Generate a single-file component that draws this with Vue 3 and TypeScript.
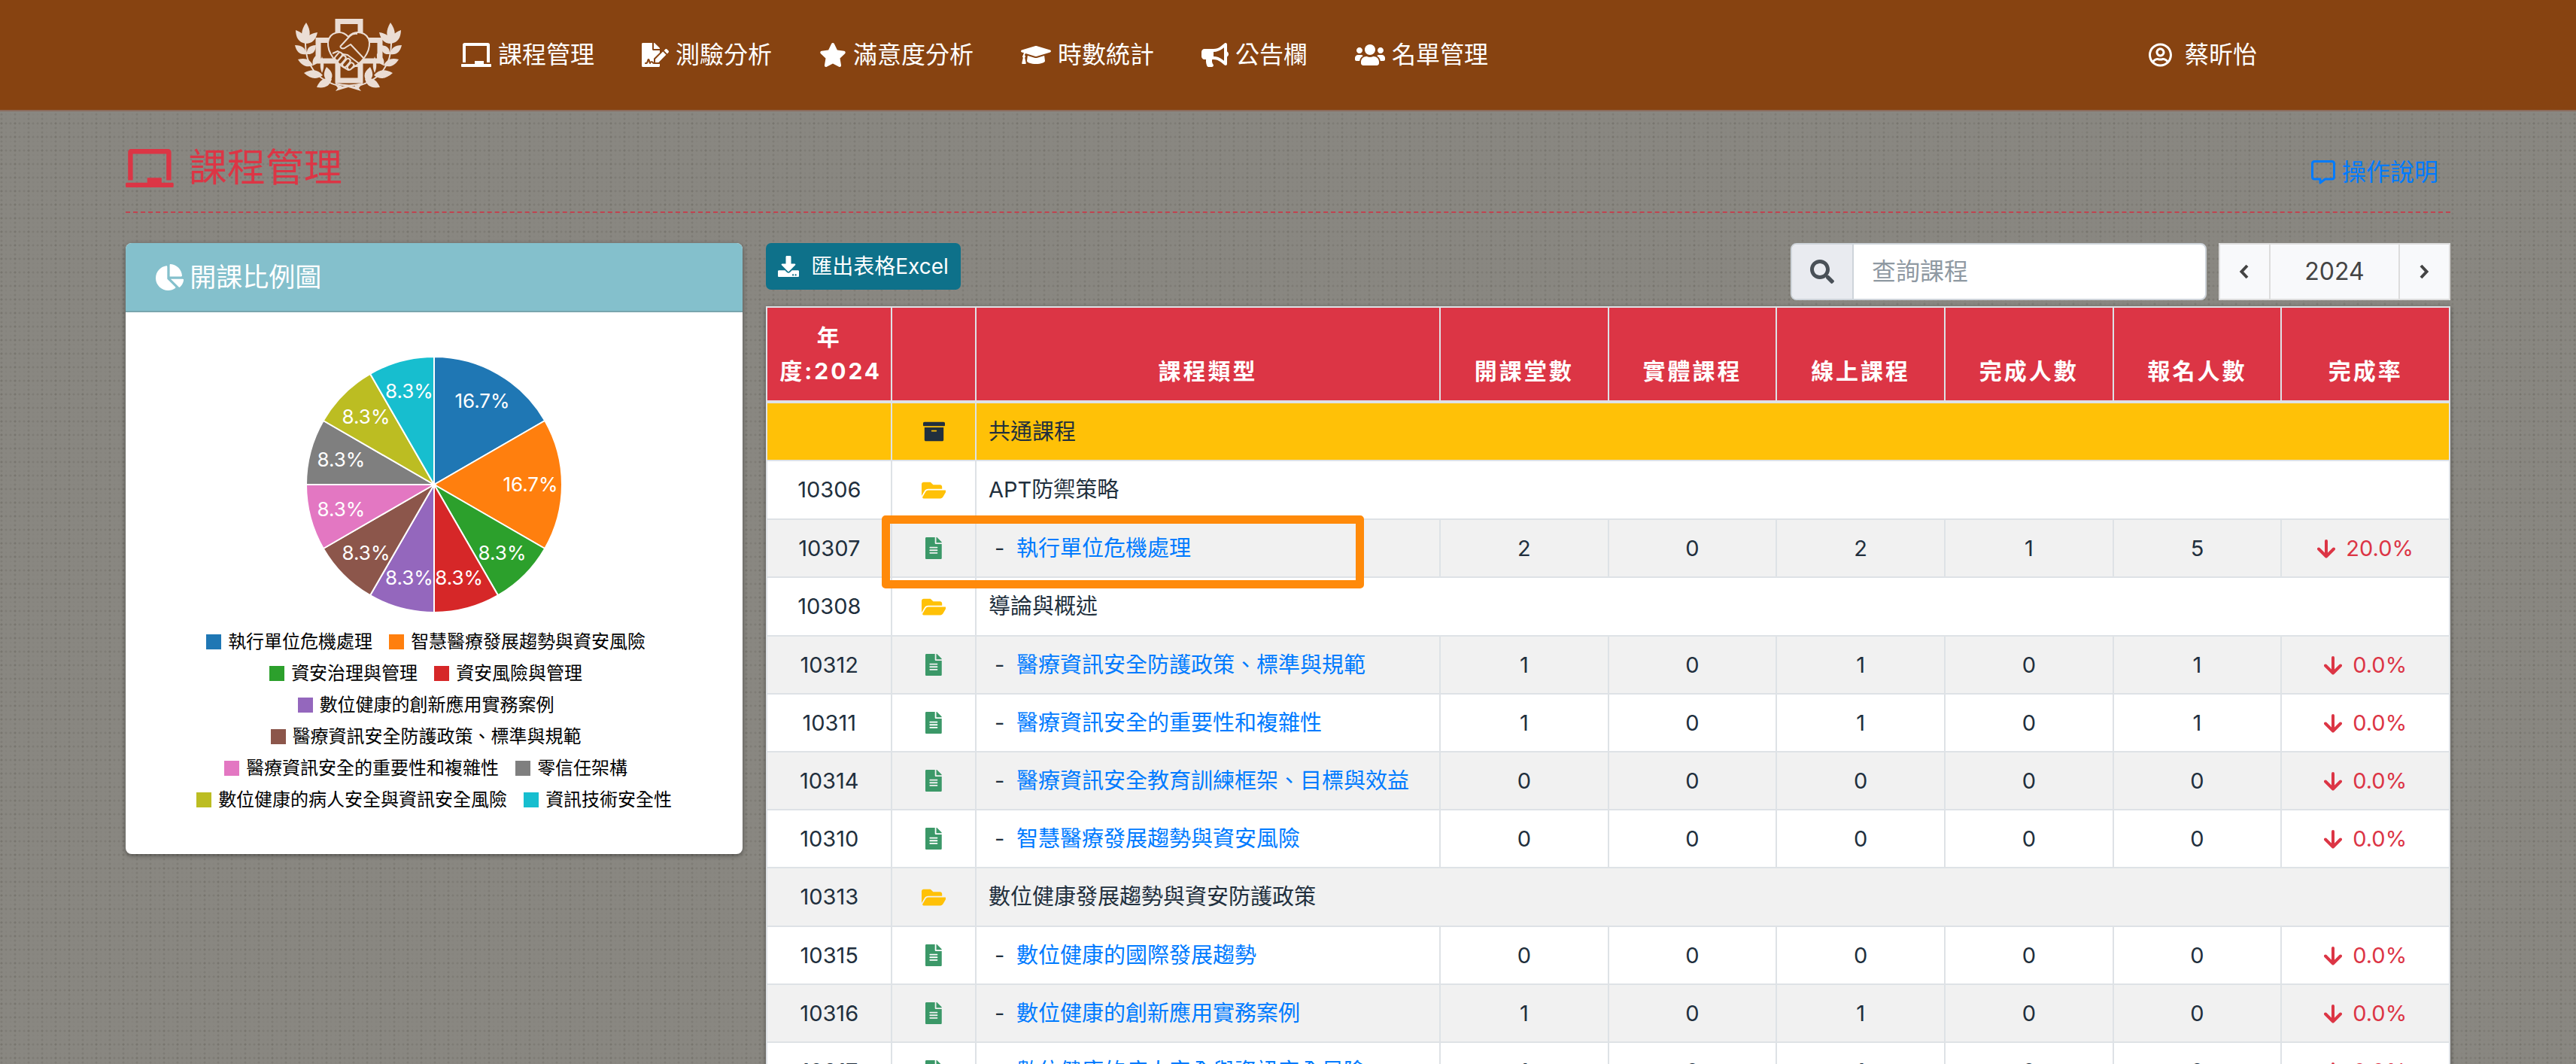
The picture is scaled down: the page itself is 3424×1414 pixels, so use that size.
<script setup lang="ts">
import { ref } from 'vue'

interface IconDef { width: number; path: string }
interface Course {
  id: string
  kind: 'group' | 'folder' | 'course'
  title: string
  values?: number[]
  rate?: string
}

const icons: Record<string, IconDef> = {
  board: { width: 640, path: 'M96 64h448v352h64V40c0-22.06-17.94-40-40-40H72C49.94 0 32 17.94 32 40v376h64V64zm528 384H480v-64H288v64H16c-8.84 0-16 7.16-16 16v32c0 8.84 7.16 16 16 16h608c8.84 0 16-7.16 16-16v-32c0-8.84-7.16-16-16-16z' },
  sign: { width: 576, path: 'M218.17 424.14c-2.95-5.92-8.09-6.52-10.17-6.52s-7.22.59-10.02 6.19l-7.67 15.34c-6.37 12.78-25.03 11.37-29.48-2.09L144 386.59l-10.61 31.88c-5.89 17.66-22.38 29.53-41 29.53H80c-8.84 0-16-7.16-16-16s7.16-16 16-16h12.39c4.83 0 9.11-3.08 10.64-7.66l18.19-54.64c3.3-9.81 12.44-16.41 22.78-16.41s19.48 6.59 22.77 16.41l13.88 41.64c19.75-16.19 54.06-9.7 66 14.16 1.89 3.78 5.49 5.95 9.36 6.26v-82.12l128-127.09V160H248c-13.2 0-24-10.8-24-24V0H24C10.7 0 0 10.7 0 24v464c0 13.3 10.7 24 24 24h336c13.3 0 24-10.7 24-24v-40l-128-.11c-16.12-.31-30.58-9.28-37.83-23.75zM384 121.9c0-6.3-2.5-12.4-7-16.9L279.1 7c-4.5-4.5-10.6-7-17-7H256v128h128v-6.1zm-96 225.06V416h68.99l161.68-162.78-67.88-67.88L288 346.96zm280.54-179.63l-31.87-31.87c-9.94-9.94-26.07-9.94-36.01 0l-27.25 27.25 67.88 67.88 27.25-27.25c9.95-9.94 9.95-26.07 0-36.01z' },
  star: { width: 576, path: 'M259.3 17.8L194 150.2 47.9 171.5c-26.2 3.8-36.7 36.1-17.7 54.6l105.7 103-25 145.5c-4.5 26.3 23.2 46 46.4 33.7L288 439.6l130.7 68.7c23.2 12.2 50.9-7.4 46.4-33.7l-25-145.5 105.7-103c19-18.5 8.5-50.8-17.7-54.6L382 150.2 316.7 17.8c-11.7-23.6-45.6-23.9-57.4 0z' },
  cap: { width: 640, path: 'M622.34 153.2L343.4 67.5c-15.2-4.67-31.6-4.67-46.79 0L17.66 153.2c-23.54 7.23-23.54 38.36 0 45.59l48.63 14.94c-10.67 13.19-17.23 29.28-17.88 46.9C38.78 266.15 32 276.11 32 288c0 10.78 5.68 19.85 13.86 25.65L20.33 428.53C18.11 438.52 25.71 448 35.94 448h56.11c10.24 0 17.84-9.48 15.62-19.47L82.14 313.65C90.32 307.85 96 298.78 96 288c0-11.57-6.47-21.25-15.66-26.87.76-15.02 8.44-28.3 20.69-36.72L296.6 284.5c9.06 2.78 26.44 6.25 46.79 0l278.95-85.7c23.55-7.24 23.55-38.36 0-45.6zM352.79 315.09c-28.53 8.76-52.84 3.92-65.59 0l-145.02-44.55L128 384c0 35.35 85.96 64 192 64s192-28.65 192-64l-14.18-113.47-145.03 44.56z' },
  horn: { width: 576, path: 'M576 240c0-23.63-12.95-44.04-32-55.12V32.01C544 23.26 537.02 0 512 0c-7.12 0-14.19 2.38-19.98 7.02l-85.03 68.03C364.28 109.19 310.66 128 256 128H64c-35.35 0-64 28.65-64 64v96c0 35.35 28.65 64 64 64h33.7c-1.39 10.48-2.18 21.14-2.18 32 0 39.77 9.26 77.35 25.56 110.94 5.19 10.69 16.52 17.06 28.4 17.06h74.28c26.05 0 41.69-29.84 25.9-50.56-16.4-21.52-26.15-48.36-26.15-77.44 0-11.11 1.62-21.79 4.41-32H256c54.66 0 108.28 18.81 150.98 52.95l85.03 68.03a32.023 32.023 0 0 0 19.98 7.02c24.92 0 32-22.78 32-32V295.13C563.05 284.04 576 263.63 576 240zm-96 141.42l-33.05-26.44C392.95 311.78 325.12 288 256 288v-96c69.12 0 136.95-23.78 190.95-66.98L480 98.58v282.84z' },
  users: { width: 640, path: 'M96 224c35.3 0 64-28.7 64-64s-28.7-64-64-64-64 28.7-64 64 28.7 64 64 64zm448 0c35.3 0 64-28.7 64-64s-28.7-64-64-64-64 28.7-64 64 28.7 64 64 64zm32 32h-64c-17.6 0-33.5 7.1-45.1 18.6 40.3 22.1 68.9 62 75.1 109.4h66c17.7 0 32-14.3 32-32v-32c0-35.3-28.7-64-64-64zm-256 0c61.9 0 112-50.1 112-112S381.9 32 320 32 208 82.1 208 144s50.1 112 112 112zm76.8 32h-8.3c-20.8 10-43.9 16-68.5 16s-47.6-6-68.5-16h-8.3C179.6 288 128 339.6 128 403.2V432c0 26.5 21.5 48 48 48h288c26.5 0 48-21.5 48-48v-28.8c0-63.6-51.6-115.2-115.2-115.2zm-223.7-13.4C161.5 263.1 145.6 256 128 256H64c-35.3 0-64 28.7-64 64v32c0 17.7 14.3 32 32 32h65.9c6.3-47.4 34.9-87.3 75.2-109.4z' },
  user: { width: 496, path: 'M248 104c-53 0-96 43-96 96s43 96 96 96 96-43 96-96-43-96-96-96zm0 144c-26.5 0-48-21.5-48-48s21.5-48 48-48 48 21.5 48 48-21.5 48-48 48zm0-240C111 8 0 119 0 256s111 248 248 248 248-111 248-248S385 8 248 8zm0 448c-49.7 0-95.1-18.3-130.1-48.4 14.9-23 40.4-38.6 69.6-39.5 20.8 6.4 40.6 9.6 60.5 9.6s39.7-3.1 60.5-9.6c29.2 1 54.7 16.5 69.6 39.5-35 30.1-80.4 48.4-130.1 48.4zm162.7-84.1c-24.4-31.4-62.1-51.9-105.1-51.9-10.2 0-26 9.6-57.6 9.6-31.5 0-47.4-9.6-57.6-9.6-42.9 0-80.6 20.5-105.1 51.9C61.9 339.2 48 299.2 48 256c0-110.3 89.7-200 200-200s200 89.7 200 200c0 43.2-13.9 83.2-37.3 115.9z' },
  pie: { width: 544, path: 'M527.79 288H290.5l158.03 158.03c6.04 6.04 15.98 6.53 22.19.68 38.7-36.46 65.32-85.61 73.13-140.86 1.34-9.46-6.51-17.85-16.06-17.85zm-15.83-64.8C503.72 103.74 408.26 8.28 288.8.04 279.68-.59 272 7.1 272 16.24V240h223.77c9.14 0 16.82-7.68 16.19-16.8zM224 288V50.71c0-9.55-8.39-17.4-17.84-16.06C86.99 51.49-4.1 155.6.14 280.37 4.5 408.51 114.83 513.59 243.03 511.98c50.4-.63 96.97-16.87 135.26-44.03 7.9-5.6 8.42-17.23 1.57-24.08L224 288z' },
  download: { width: 512, path: 'M216 0h80c13.3 0 24 10.7 24 24v168h87.7c17.8 0 26.7 21.5 14.1 34.1L269.7 378.3c-7.5 7.5-19.8 7.5-27.3 0L90.1 226.1c-12.6-12.6-3.7-34.1 14.1-34.1H192V24c0-13.3 10.7-24 24-24zm296 376v112c0 13.3-10.7 24-24 24H24c-13.3 0-24-10.7-24-24V376c0-13.3 10.7-24 24-24h146.7l49 49c20.1 20.1 52.5 20.1 72.6 0l49-49H488c13.3 0 24 10.7 24 24zm-124 88c0-11-9-20-20-20s-20 9-20 20 9 20 20 20 20-9 20-20zm64 0c0-11-9-20-20-20s-20 9-20 20 9 20 20 20 20-9 20-20z' },
  search: { width: 512, path: 'M505 442.7L405.3 343c-4.5-4.5-10.6-7-17-7H372c27.6-35.3 44-79.7 44-128C416 93.1 322.9 0 208 0S0 93.1 0 208s93.1 208 208 208c48.3 0 92.7-16.4 128-44v16.3c0 6.4 2.5 12.5 7 17l99.7 99.7c9.4 9.4 24.6 9.4 33.9 0l28.3-28.3c9.4-9.4 9.4-24.6.1-34zM208 336c-70.7 0-128-57.2-128-128 0-70.7 57.2-128 128-128 70.7 0 128 57.2 128 128 0 70.7-57.2 128-128 128z' },
  group: { width: 512, path: 'M32 448c0 17.7 14.3 32 32 32h384c17.7 0 32-14.3 32-32V160H32v288zm160-212c0-6.6 5.4-12 12-12h104c6.6 0 12 5.4 12 12v8c0 6.6-5.4 12-12 12H204c-6.6 0-12-5.4-12-12v-8zM480 32H32C14.3 32 0 46.3 0 64v48c0 8.8 7.2 16 16 16h480c8.8 0 16-7.2 16-16V64c0-17.7-14.3-32-32-32z' },
  folder: { width: 576, path: 'M572.694 292.093L500.27 416.248A63.997 63.997 0 0 1 444.989 448H45.025c-18.523 0-30.064-20.093-20.731-36.093l72.424-124.155A64 64 0 0 1 152 256h399.964c18.523 0 30.064 20.093 20.73 36.093zM152 224h328v-48c0-26.51-21.49-48-48-48H272l-64-64H48C21.49 64 0 85.49 0 112v278.046l69.077-118.418C86.214 242.25 117.989 224 152 224z' },
  course: { width: 384, path: 'M224 136V0H24C10.7 0 0 10.7 0 24v464c0 13.3 10.7 24 24 24h336c13.3 0 24-10.7 24-24V160H248c-13.2 0-24-10.8-24-24zm64 236c0 6.6-5.4 12-12 12H108c-6.6 0-12-5.4-12-12v-8c0-6.6 5.4-12 12-12h168c6.6 0 12 5.4 12 12v8zm0-64c0 6.6-5.4 12-12 12H108c-6.6 0-12-5.4-12-12v-8c0-6.6 5.4-12 12-12h168c6.6 0 12 5.4 12 12v8zm0-72v8c0 6.6-5.4 12-12 12H108c-6.6 0-12-5.4-12-12v-8c0-6.6 5.4-12 12-12h168c6.6 0 12 5.4 12 12zm96-114.1v6.1H256V0h6.1c6.4 0 12.5 2.5 17 7l97.9 98c4.5 4.5 7 10.6 7 16.9z' },
}
const box = (name: string) => `0 0 ${icons[name].width} 512`

const nav = [
  { icon: 'board', label: '課程管理' },
  { icon: 'sign', label: '測驗分析' },
  { icon: 'star', label: '滿意度分析' },
  { icon: 'cap', label: '時數統計' },
  { icon: 'horn', label: '公告欄' },
  { icon: 'users', label: '名單管理' },
]

const shares = [
  { name: '執行單位危機處理', count: 2, color: '#1f77b4' },
  { name: '智慧醫療發展趨勢與資安風險', count: 2, color: '#ff7f0e' },
  { name: '資安治理與管理', count: 1, color: '#2ca02c' },
  { name: '資安風險與管理', count: 1, color: '#d62728' },
  { name: '數位健康的創新應用實務案例', count: 1, color: '#9467bd' },
  { name: '醫療資訊安全防護政策、標準與規範', count: 1, color: '#8c564b' },
  { name: '醫療資訊安全的重要性和複雜性', count: 1, color: '#e377c2' },
  { name: '零信任架構', count: 1, color: '#7f7f7f' },
  { name: '數位健康的病人安全與資訊安全風險', count: 1, color: '#bcbd22' },
  { name: '資訊技術安全性', count: 1, color: '#17becf' },
]

const total = shares.reduce((sum, s) => sum + s.count, 0)
const radius = 170
let turned = 0
const slices = shares.map((s) => {
  const from = (turned / total) * 2 * Math.PI
  turned += s.count
  const to = (turned / total) * 2 * Math.PI
  const mid = (from + to) / 2
  const at = (a: number, r: number) => `${(Math.sin(a) * r).toFixed(2)} ${(-Math.cos(a) * r).toFixed(2)}`
  return {
    color: s.color,
    d: `M0 0L${at(from, radius)}A${radius} ${radius} 0 0 1 ${at(to, radius)}Z`,
    x: Math.sin(mid) * 128,
    y: -Math.cos(mid) * 128,
    label: `${((s.count / total) * 100).toFixed(1)}%`,
  }
})

/* laurel leaves: base x, base y, tip x, tip y, half width */
const leaves = [
  [14, 32, 15, 5, 7], [14, 33, 1, 15, 6], [14, 33, 30, 18, 6],
  [15, 47, 0, 35, 6], [16, 47, 28, 35, 6], [24, 62, 4, 54, 6],
  [24, 62, 33, 46, 5], [37, 75, 12, 72, 7], [36, 72, 36, 50, 3],
  [46, 84, 42, 64, 7], [49, 80, 29, 91, 7],
].map(([bx, by, tx, ty, w]) => {
  const dx = tx - bx
  const dy = ty - by
  const len = Math.hypot(dx, dy)
  const nx = (-dy / len) * w
  const ny = (dx / len) * w
  const p = (t: number, side: number) => `${(bx + dx * t + nx * side).toFixed(1)} ${(by + dy * t + ny * side).toFixed(1)}`
  return `M${bx} ${by}C${p(0.3, 1)} ${p(0.6, 1)} ${tx} ${ty}C${p(0.6, -1)} ${p(0.3, -1)} ${bx} ${by}Z`
}).join('')

const year = ref(2024)
const keyword = ref('')
const columns = ['開課堂數', '實體課程', '線上課程', '完成人數', '報名人數', '完成率']

const courses: Course[] = [
  { id: '', kind: 'group', title: '共通課程' },
  { id: '10306', kind: 'folder', title: 'APT防禦策略' },
  { id: '10307', kind: 'course', title: '執行單位危機處理', values: [2, 0, 2, 1, 5], rate: '20.0%' },
  { id: '10308', kind: 'folder', title: '導論與概述' },
  { id: '10312', kind: 'course', title: '醫療資訊安全防護政策、標準與規範', values: [1, 0, 1, 0, 1], rate: '0.0%' },
  { id: '10311', kind: 'course', title: '醫療資訊安全的重要性和複雜性', values: [1, 0, 1, 0, 1], rate: '0.0%' },
  { id: '10314', kind: 'course', title: '醫療資訊安全教育訓練框架、目標與效益', values: [0, 0, 0, 0, 0], rate: '0.0%' },
  { id: '10310', kind: 'course', title: '智慧醫療發展趨勢與資安風險', values: [0, 0, 0, 0, 0], rate: '0.0%' },
  { id: '10313', kind: 'folder', title: '數位健康發展趨勢與資安防護政策' },
  { id: '10315', kind: 'course', title: '數位健康的國際發展趨勢', values: [0, 0, 0, 0, 0], rate: '0.0%' },
  { id: '10316', kind: 'course', title: '數位健康的創新應用實務案例', values: [1, 0, 1, 0, 0], rate: '0.0%' },
  { id: '10317', kind: 'course', title: '數位健康的病人安全與資訊安全風險', values: [1, 0, 1, 0, 0], rate: '0.0%' },
]
</script>

<template>
  <div class="page">
    <header class="topbar">
      <a href="#" class="brand" aria-label="首頁">
        <svg class="logo" viewBox="0 0 142 96" fill="none" stroke="#ebddd4">
          <g fill="#ebddd4" stroke="none">
            <path :d="leaves" />
            <path :d="leaves" transform="translate(142 0) scale(-1 1)" />
            <path d="M54 88l8 2 9-2 9 2 8-2-3 4 3 4-10-3-7-2-7 2-10 3 3-4z" />
          </g>
          <path d="M14 30C13 58 26 82 62 90M128 30C129 58 116 82 80 90" stroke-width="2" />
          <path d="M57 3.500H87V28.500H113V56H87V82H57V56H31V28.500H57Z" stroke-width="7" />
          <path d="M54 86Q72 91 90 86" stroke-width="2" />
          <path d="M71 68C54 60 43 45 44 31C46 17 62 14 71 24C80 14 97 17 99 31C100 45 89 60 71 68Z" fill="#874311" stroke-width="2" />
          <path d="M60 37L73 23Q77 19 83 20M60 37Q63 42 69 37L74 34L91 52Q93 57 88 57M50 46L57 43L64 47L70 48L86 60Q84 65 78 62" stroke-width="2" stroke-linejoin="round" />
          <g stroke-width="2" fill="#874311">
            <rect x="52" y="47" width="12" height="6" rx="3" transform="rotate(-50 58 50)" />
            <rect x="56" y="52" width="13" height="6" rx="3" transform="rotate(-50 62 55)" />
            <rect x="62" y="56" width="13" height="6" rx="3" transform="rotate(-50 68 59)" />
            <rect x="69" y="60" width="10" height="6" rx="3" transform="rotate(-50 74 63)" />
          </g>
        </svg>
      </a>
      <nav class="menu">
        <a v-for="item in nav" :key="item.label" href="#" class="menu-item">
          <svg class="glyph" :viewBox="box(item.icon)"><path :d="icons[item.icon].path" /></svg>
          <span>{{ item.label }}</span>
        </a>
      </nav>
      <a href="#" class="account">
        <svg class="glyph" :viewBox="box('user')"><path :d="icons.user.path" /></svg>
        <span>蔡昕怡</span>
      </a>
    </header>

    <main class="content">
      <div class="heading">
        <h1>
          <svg class="glyph" :viewBox="box('board')"><path :d="icons.board.path" /></svg>
          <span>課程管理</span>
        </h1>
        <a href="#" class="help">
          <svg viewBox="0 0 32 32" fill="none" stroke="currentColor" stroke-width="3" stroke-linejoin="round">
            <path d="M4.500 1.500H27.500Q30.500 1.500 30.500 4.500V22Q30.500 25 27.500 25H18.500L12 30V25H4.500Q1.500 25 1.500 22V4.500Q1.500 1.500 4.500 1.500Z" />
          </svg>
          <span>操作說明</span>
        </a>
      </div>

      <div class="columns">
        <section class="card">
          <h2 class="card-head">
            <svg class="glyph" :viewBox="box('pie')"><path :d="icons.pie.path" /></svg>
            <span>開課比例圖</span>
          </h2>
          <div class="card-body">
            <svg class="chart" viewBox="-172 -172 344 344" role="img" aria-label="開課比例圖">
              <path v-for="s in slices" :key="s.d" :d="s.d" :fill="s.color" stroke="#fff" stroke-width="2" />
              <text v-for="s in slices" :key="s.d" :x="s.x" :y="s.y" dy="9">{{ s.label }}</text>
            </svg>
            <ul class="legend">
              <li v-for="s in shares" :key="s.name">
                <i :style="{ background: s.color }"></i>{{ s.name }}
              </li>
            </ul>
          </div>
        </section>

        <section class="listing">
          <div class="toolbar">
            <button type="button" class="export">
              <svg class="glyph" :viewBox="box('download')"><path :d="icons.download.path" /></svg>
              <span>匯出表格Excel</span>
            </button>
            <div class="search">
              <label for="keyword" aria-label="查詢課程">
                <svg class="glyph" :viewBox="box('search')"><path :d="icons.search.path" /></svg>
              </label>
              <input id="keyword" v-model="keyword" type="text" placeholder="查詢課程" />
            </div>
            <div class="years">
              <button type="button" aria-label="前一年" @click="year--">
                <svg viewBox="0 0 14 20"><path d="M11 2L3.500 10L11 18" /></svg>
              </button>
              <output>{{ year }}</output>
              <button type="button" aria-label="後一年" @click="year++">
                <svg viewBox="0 0 14 20"><path d="M3 2L10.500 10L3 18" /></svg>
              </button>
            </div>
          </div>

          <div class="table-wrap">
            <table>
              <colgroup>
                <col class="c-id" /><col class="c-icon" /><col />
                <col v-for="c in columns" :key="c" class="c-num" />
              </colgroup>
              <thead>
                <tr>
                  <th>年度:{{ year }}</th>
                  <th></th>
                  <th>課程類型</th>
                  <th v-for="c in columns" :key="c">{{ c }}</th>
                </tr>
              </thead>
              <tbody>
                <tr v-for="c in courses" :key="c.title" :class="c.kind">
                  <td>{{ c.id }}</td>
                  <td>
                    <svg class="glyph" :viewBox="box(c.kind)"><path :d="icons[c.kind].path" /></svg>
                  </td>
                  <template v-if="c.kind === 'course'">
                    <td class="title"><span class="dash">-</span><a href="#">{{ c.title }}</a></td>
                    <td v-for="(v, i) in c.values" :key="i">{{ v }}</td>
                    <td class="rate">
                      <svg viewBox="0 0 24 25"><path d="M12 2V22M2 12.500L12 22.500L22 12.500" /></svg>
                      <span>{{ c.rate }}</span>
                    </td>
                  </template>
                  <td v-else class="title" colspan="7">{{ c.title }}</td>
                </tr>
              </tbody>
            </table>
            <div class="highlight"></div>
          </div>
        </section>
      </div>
    </main>
  </div>
</template>

<style>
body {
  margin: 0;
  background: #888680;
}
</style>

<style scoped>
* {
  box-sizing: border-box;
}
.page {
  height: 100vh;
  overflow: hidden;
  font-family: Inter, "Noto Sans CJK TC", sans-serif;
  font-size: 32px;
  line-height: 48px;
  color: #212f3d;
  background-color: #898781;
  background-image:
    radial-gradient(circle at 2px 2px, rgba(70, 68, 60, 0.13) 1px, transparent 2px),
    radial-gradient(circle at 2px 2px, rgba(70, 68, 60, 0.13) 1px, transparent 2px),
    radial-gradient(circle at 2px 2px, rgba(70, 68, 60, 0.04) 1px, transparent 2px);
  background-size: 6px 18px, 18px 6px, 6px 6px;
}
a {
  color: #007bff;
  text-decoration: none;
}
button,
input {
  font: inherit;
}
.glyph {
  display: block;
  height: 32px;
  fill: currentColor;
}
.topbar {
  display: flex;
  align-items: center;
  height: 148px;
  padding: 0 424px 0 392px;
  background: #874311;
  border-bottom: 2px solid #8c6c5c;
}
.topbar a {
  color: #fff;
}
.logo {
  display: block;
  width: 142px;
  height: 96px;
}
.menu {
  display: flex;
  gap: 63px;
  margin-left: 79px;
}
.menu-item,
.account {
  display: flex;
  align-items: center;
  gap: 9px;
}
.account {
  gap: 17px;
  margin-left: auto;
}
.content {
  padding: 37px 167px 0;
}
.heading {
  display: flex;
  justify-content: space-between;
  align-items: flex-end;
  padding-bottom: 20px;
  margin-bottom: 40px;
  border-bottom: 2px dashed #c04450;
}
h1,
h2 {
  display: flex;
  align-items: center;
  margin: 0;
  font-weight: 400;
}
h1 {
  gap: 20px;
  font-size: 51px;
  line-height: 76px;
  color: #dc3545;
}
h1 .glyph {
  height: 51px;
}
.help {
  display: flex;
  align-items: center;
  gap: 9px;
  height: 64px;
  padding-right: 16px;
}
.help svg {
  width: 32px;
  height: 32px;
}
.columns {
  display: grid;
  grid-template-columns: minmax(0, 410fr) minmax(0, 1119fr);
  gap: 31px;
  align-items: start;
}
.card {
  overflow: hidden;
  background: #fff;
  border-radius: 8px;
  box-shadow: 0 2px 6px rgba(0, 0, 0, 0.4);
}
.card-head {
  gap: 8px;
  height: 92px;
  padding: 0 40px;
  font-size: 35px;
  color: #fff;
  background: #84c0cc;
  border-bottom: 2px solid #78a5ae;
}
.card-head .glyph {
  height: 35px;
}
.card-body {
  padding: 57px 40px 51px;
}
.chart {
  display: block;
  width: 344px;
  margin: 0 auto 16px;
}
.chart text {
  fill: #fff;
  font-size: 26px;
  text-anchor: middle;
}
.legend {
  display: flex;
  flex-wrap: wrap;
  justify-content: center;
  margin: 0;
  padding: 0;
  list-style: none;
  font-size: 24px;
  line-height: 42px;
  color: #000;
}
.legend li {
  display: flex;
  align-items: center;
  gap: 9px;
  margin-right: 22px;
}
.legend li:last-child {
  margin-right: 0;
}
.legend i {
  width: 20px;
  height: 20px;
}
.toolbar {
  display: flex;
  align-items: flex-start;
  margin-bottom: 8px;
}
.export {
  display: flex;
  align-items: center;
  gap: 16px;
  height: 62px;
  padding: 0 16px;
  font-size: 28px;
  color: #fff;
  background: #0e718a;
  border: 0;
  border-radius: 7px;
}
.export .glyph {
  height: 28px;
}
.search {
  display: flex;
  width: 553px;
  height: 76px;
  margin-left: auto;
  overflow: hidden;
  background: #fff;
  border: 2px solid #ced4da;
  border-radius: 8px;
}
.search label {
  display: flex;
  align-items: center;
  padding: 0 24px;
  color: #495057;
  background: #e9ebf0;
  border-right: 2px solid #ced4da;
}
.search input {
  flex: 1;
  min-width: 0;
  padding: 0 24px;
  color: #495057;
  background: transparent;
  border: 0;
  outline: 0;
}
.search input::placeholder {
  color: #8f99a2;
  opacity: 1;
}
.years {
  display: flex;
  width: 308px;
  height: 76px;
  margin-left: 16px;
  color: #444;
  background: #f8f9fb;
  border: 2px solid #ddd;
}
.years button {
  display: flex;
  align-items: center;
  justify-content: center;
  width: 65px;
  padding: 0;
  background: transparent;
  border: 0;
}
.years svg {
  width: 14px;
  height: 20px;
  fill: none;
  stroke: #444;
  stroke-width: 4;
}
.years output {
  flex: 1;
  line-height: 72px;
  text-align: center;
  border: solid #ddd;
  border-width: 0 2px;
}
.table-wrap {
  position: relative;
  box-shadow: 0 2px 6px rgba(0, 0, 0, 0.4);
}
table {
  width: 100%;
  table-layout: fixed;
  border-collapse: collapse;
  background: #fff;
  font-size: 29px;
  line-height: 43px;
  text-align: center;
}
.c-id {
  width: 166px;
}
.c-icon {
  width: 5%;
}
.c-num {
  width: 10%;
}
th,
td {
  padding: 16px;
  border: 2px solid #dee2e6;
}
th {
  padding-top: 17px;
  font-size: 30px;
  line-height: 45px;
  letter-spacing: 3px;
  vertical-align: bottom;
  color: #fff;
  background: #dc3545;
  border-bottom-width: 4px;
}
tbody tr:nth-child(odd) {
  background: #f1f1f1;
}
tbody tr.group {
  background: #ffc107;
}
td .glyph {
  height: 29px;
  margin: 0 auto;
}
.folder {
  line-height: 44px;
}
.folder .glyph {
  color: #ffc107;
}
.course .glyph {
  color: #3b9868;
}
.title {
  text-align: left;
}
.dash {
  display: inline-block;
  width: 37px;
  padding-left: 8px;
}
.rate {
  color: #dc3545;
}
.rate svg {
  width: 24px;
  height: 25px;
  margin-right: 14px;
  vertical-align: -3px;
  fill: none;
  stroke: currentColor;
  stroke-width: 4;
  stroke-linecap: round;
  stroke-linejoin: round;
}
.highlight {
  position: absolute;
  top: 278px;
  left: 6.86%;
  width: 28.64%;
  height: 97px;
  border: 11px solid #ff8a0a;
  border-radius: 5px;
}
</style>
